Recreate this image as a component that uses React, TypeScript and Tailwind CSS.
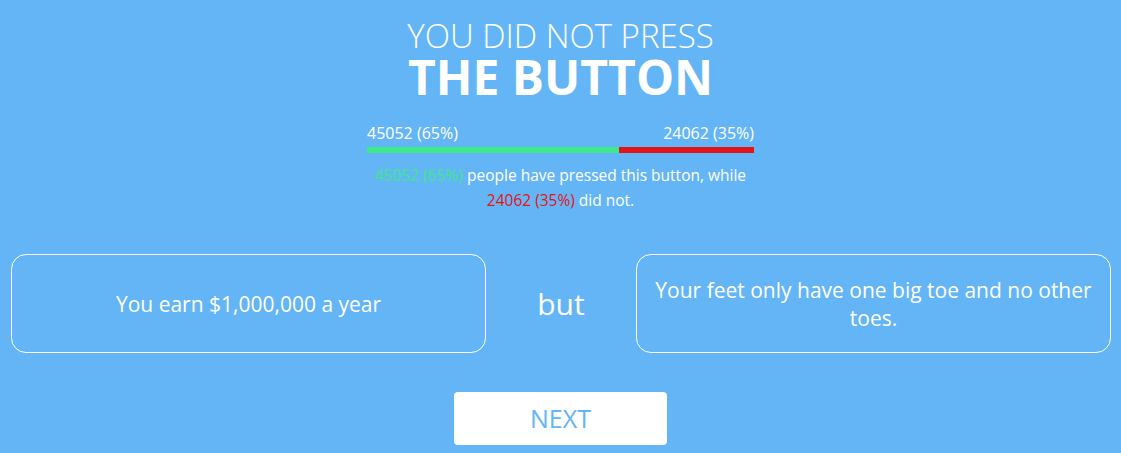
export default function App() {
  const pressed = 45052;
  const notPressed = 24062;
  const pct = Math.round((pressed / (pressed + notPressed)) * 100);

  return (
    <div className="min-h-[453px] bg-[#64b5f6] text-white font-['Open_Sans',sans-serif] overflow-hidden">
      <div className="flex flex-col items-center pt-[18px]">
        <h1 className="text-[33px] font-light leading-[36px]">YOU DID NOT PRESS</h1>
        <h2 className="text-[48px] font-bold leading-[44px] mt-[1px]">THE BUTTON</h2>

        <div className="w-[387px] mt-[24px]">
          <div className="flex justify-between text-[16px] leading-[20px]">
            <span>45052 ({pct}%)</span>
            <span>24062 ({100 - pct}%)</span>
          </div>
          <div className="flex h-[6px] mt-[4px]">
            <div className="bg-[#3ee88b]" style={{ width: `${pct}%` }} />
            <div className="bg-[#e31414] flex-1" />
          </div>
        </div>

        <p className="text-[15.5px] leading-[25px] text-center mt-[10px] w-[380px]">
          <span className="text-[#3ee88b]">45052 (65%)</span> people have pressed this button, while
          <br />
          <span className="text-[#e31414]">24062 (35%)</span> did not.
        </p>
      </div>

      <div className="flex items-center justify-between pl-[11px] pr-[10px] mt-[41px]">
        <div className="w-[475px] h-[99px] border border-white rounded-[15px] flex items-center justify-center px-4 text-center text-[21px] leading-[28px]">
          You earn $1,000,000 a year
        </div>
        <div className="text-[30px]">but</div>
        <div className="w-[475px] h-[99px] border border-white rounded-[15px] flex items-center justify-center px-4 text-center text-[21px] leading-[28px]">
          Your feet only have one big toe and no other toes.
        </div>
      </div>

      <div className="flex justify-center mt-[39px]">
        <button className="w-[213px] h-[53px] bg-white rounded-[4px] text-[#64b5f6] text-[25px]">NEXT</button>
      </div>
    </div>
  );
}
